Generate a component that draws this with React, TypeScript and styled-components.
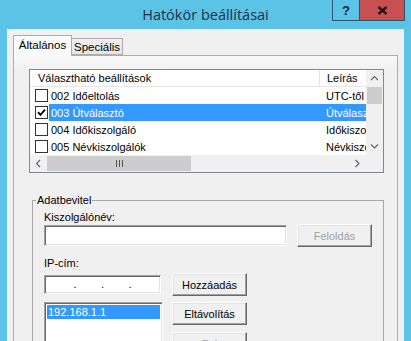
import styled, { createGlobalStyle } from 'styled-components';

const GlobalStyle = createGlobalStyle`
  html, body {
    margin: 0;
    padding: 0;
    background: #5bc3e6;
  }
  * {
    box-sizing: border-box;
  }
`;

const OPTIONS = [
  { id: '002', name: '002 Időeltolás', desc: 'UTC-től', checked: false, selected: false },
  { id: '003', name: '003 Útválasztó', desc: 'Útválasztó', checked: true, selected: true },
  { id: '004', name: '004 Időkiszolgáló', desc: 'Időkiszolgáló', checked: false, selected: false },
  { id: '005', name: '005 Névkiszolgálók', desc: 'Névkiszolgálók', checked: false, selected: false },
];

const Chevron = ({ dir }: { dir: 'up' | 'down' | 'left' | 'right' }) => {
  const pts = {
    up: '1,5 4.5,1.5 8,5',
    down: '1,1.5 4.5,5 8,1.5',
    left: '5,1 1.5,4.5 5,8',
    right: '1.5,1 5,4.5 1.5,8',
  }[dir];
  const w = dir === 'up' || dir === 'down' ? 9 : 7;
  const h = dir === 'up' || dir === 'down' ? 7 : 9;
  return (
    <svg width={w} height={h} viewBox={`0 0 ${w} ${h}`}>
      <polyline points={pts} fill="none" stroke="#606060" strokeWidth="1.1" />
    </svg>
  );
};

const App = () => {
  return (
    <>
      <GlobalStyle />
      <Window>
        <TitleBar>
          <span />
          <Title>Hatókör beállításai</Title>
          <CaptionGroup>
            <HelpButton>?</HelpButton>
            <CloseButton>
              <svg width="11" height="9" viewBox="0 0 11 9">
                <path d="M1.5 1 L9.5 8 M9.5 1 L1.5 8" stroke="#1b1b1b" strokeWidth="2.4" />
              </svg>
            </CloseButton>
          </CaptionGroup>
        </TitleBar>

        <Client>
          <TabStrip>
            <Tab $active $width={59}>Általános</Tab>
            <Tab $width={51}>Speciális</Tab>
          </TabStrip>
          <TabPanel>
            <ListView>
              <ListMain>
                <Columns>
                  <HeaderRow>
                    <NameHeader>Választható beállítások</NameHeader>
                    <DescHeader>Leírás</DescHeader>
                  </HeaderRow>
                  {OPTIONS.map((o) => (
                    <Row key={o.id}>
                      <CheckCell>
                        <CheckBox>
                          {o.checked && (
                            <svg width="9" height="9" viewBox="0 0 9 9">
                              <path d="M1 4.2 L3.4 6.8 L8 1.6" fill="none" stroke="#000" strokeWidth="1.8" />
                            </svg>
                          )}
                        </CheckBox>
                      </CheckCell>
                      <NameCell $selected={o.selected}>{o.name}</NameCell>
                      <DescCell $selected={o.selected}>{o.desc}</DescCell>
                    </Row>
                  ))}
                </Columns>
                <VScroll>
                  <ScrollArrow><Chevron dir="up" /></ScrollArrow>
                  <VThumb />
                  <VTrack />
                  <ScrollArrow><Chevron dir="down" /></ScrollArrow>
                </VScroll>
              </ListMain>
              <HScrollRow>
                <HScroll>
                  <ScrollArrow><Chevron dir="left" /></ScrollArrow>
                  <HThumb>
                    <Grip />
                    <Grip />
                    <Grip />
                  </HThumb>
                  <HTrack />
                  <ScrollArrow><Chevron dir="right" /></ScrollArrow>
                </HScroll>
                <Corner />
              </HScrollRow>
            </ListView>

            <Group>
              <Legend>Adatbevitel</Legend>
              <FieldLabel>Kiszolgálónév:</FieldLabel>
              <InputRow>
                <SunkenInput $width={243} $height={21} />
                <PushButton $disabled $width={75} $gap={10}>Feloldás</PushButton>
              </InputRow>

              <FieldLabel $top={10}>IP-cím:</FieldLabel>
              <IpArea>
                <IpColumn>
                  <IpInput>
                    <IpSeg />
                    <IpDot>.</IpDot>
                    <IpSeg />
                    <IpDot>.</IpDot>
                    <IpSeg />
                    <IpDot>.</IpDot>
                    <IpSeg />
                  </IpInput>
                  <AddressList>
                    <AddressItem $selected>192.168.1.1</AddressItem>
                  </AddressList>
                </IpColumn>
                <ButtonColumn>
                  <PushButton $width={75}>Hozzáadás</PushButton>
                  <PushButton $width={75}>Eltávolítás</PushButton>
                  <PushButton $disabled $width={75} $top={1}>Fel</PushButton>
                </ButtonColumn>
              </IpArea>
            </Group>
          </TabPanel>
        </Client>
      </Window>
    </>
  );
};

export default App;

const Window = styled.div`
  width: 411px;
  height: 341px;
  overflow: hidden;
  background: #5bc3e6;
  font-family: 'Liberation Sans', Arial, sans-serif;
  font-size: 11px;
  color: #000;
`;

const TitleBar = styled.div`
  height: 29px;
  display: grid;
  grid-template-columns: 1fr auto 1fr;
  align-items: start;
`;

const Title = styled.div`
  font-family: 'Open Sans', 'Noto Sans', sans-serif;
  font-size: 14.5px;
  line-height: 29px;
  color: #1e3148;
  white-space: nowrap;
`;

const CaptionGroup = styled.div`
  justify-self: end;
  margin-right: 6px;
  display: flex;
  height: 21px;
  border: 1px solid #2c526e;
  border-top: none;
`;

const HelpButton = styled.div`
  width: 27px;
  display: flex;
  align-items: center;
  justify-content: center;
  font-family: 'Liberation Sans', Arial, sans-serif;
  font-weight: 700;
  font-size: 13px;
  color: #14273a;
  border-right: 1px solid #2c526e;
`;

const CloseButton = styled.div`
  width: 44px;
  background: #c75050;
  display: flex;
  align-items: center;
  justify-content: center;
`;

const Client = styled.div`
  margin: 0 7px;
  height: 312px;
  background: #f0f0f0;
  padding: 7px 6px 0 6px;
`;

const TabStrip = styled.div`
  display: flex;
  align-items: flex-end;
  height: 20px;
  position: relative;
  z-index: 1;
  margin-bottom: -1px;
`;

const Tab = styled.div<{ $active?: boolean; $width: number }>`
  width: ${(p) => p.$width}px;
  flex: none;
  height: ${(p) => (p.$active ? '21px' : '17px')};
  margin-bottom: ${(p) => (p.$active ? '0' : '1px')};
  padding-top: ${(p) => (p.$active ? '2px' : '1px')};
  text-align: center;
  border: 1px solid #acacac;
  border-bottom: ${(p) => (p.$active ? 'none' : '1px solid #acacac')};
  border-left: ${(p) => (p.$active ? '1px solid #acacac' : 'none')};
  background: ${(p) => (p.$active ? '#fafafa' : 'linear-gradient(#f0f0f0, #e5e5e5)')};
  font-size: 11.5px;
  line-height: 14px;
  white-space: nowrap;
  overflow: hidden;
`;

const TabPanel = styled.div`
  height: 400px;
  border: 1px solid #acacac;
  background: linear-gradient(#fafafa, #f0f0f0 14px);
  padding: 13px 0 0 15px;
`;

const ListView = styled.div`
  width: 355px;
  border: 1px solid #828790;
  background: #fff;
`;

const ListMain = styled.div`
  display: flex;
`;

const Columns = styled.div`
  flex: 1;
  min-width: 0;
`;

const HeaderRow = styled.div`
  display: flex;
  height: 17px;
  border-bottom: 1px solid #e5e5e5;
  line-height: 16px;
`;

const NameHeader = styled.div`
  width: 290px;
  padding-left: 8px;
  border-right: 1px solid #e5e5e5;
`;

const DescHeader = styled.div`
  flex: 1;
  padding-left: 7px;
  white-space: nowrap;
  overflow: hidden;
`;

const Row = styled.div`
  display: flex;
  height: 17px;
  line-height: 18px;
`;

const CheckCell = styled.div`
  width: 19px;
  padding-left: 5px;
  display: flex;
  align-items: center;
`;

const CheckBox = styled.div`
  width: 13px;
  height: 13px;
  border: 1px solid #333;
  background: #fff;
  display: flex;
  align-items: center;
  justify-content: center;
`;

const NameCell = styled.div<{ $selected?: boolean }>`
  width: 271px;
  padding-left: 2px;
  white-space: nowrap;
  background: ${(p) => (p.$selected ? '#3399ff' : 'transparent')};
  color: ${(p) => (p.$selected ? '#fff' : '#000')};
`;

const DescCell = styled.div<{ $selected?: boolean }>`
  flex: 1;
  padding-left: 6px;
  white-space: nowrap;
  overflow: hidden;
  text-overflow: clip;
  background: ${(p) => (p.$selected ? '#3399ff' : 'transparent')};
  color: ${(p) => (p.$selected ? '#fff' : '#000')};
`;

const VScroll = styled.div`
  width: 17px;
  display: flex;
  flex-direction: column;
  background: #f0f0f0;
`;

const ScrollArrow = styled.div`
  width: 17px;
  height: 17px;
  flex: none;
  display: flex;
  align-items: center;
  justify-content: center;
  background: #f0f0f0;
`;

const VThumb = styled.div`
  height: 17px;
  margin: 0 1px;
  background: #cdcdcd;
`;

const VTrack = styled.div`
  flex: 1;
`;

const HScrollRow = styled.div`
  display: flex;
  height: 17px;
`;

const HScroll = styled.div`
  flex: 1;
  display: flex;
  background: #f0f0f0;
`;

const HThumb = styled.div`
  width: 144px;
  margin: 1px 0;
  background: #cdcdcd;
  display: flex;
  align-items: center;
  justify-content: center;
  gap: 2px;
`;

const Grip = styled.div`
  width: 1px;
  height: 7px;
  background: #555;
`;

const HTrack = styled.div`
  flex: 1;
`;

const Corner = styled.div`
  width: 17px;
  background: #f0f0f0;
`;

const Group = styled.fieldset`
  width: 352px;
  margin: 21px 0 0 3px;
  padding: 4px 11px 0 11px;
  border: 1px solid #a8a8a8;
  min-width: 0;
`;

const Legend = styled.legend`
  padding: 0 1px;
  margin-left: -8px;
  line-height: 13px;
`;

const FieldLabel = styled.div<{ $top?: number }>`
  margin-top: ${(p) => p.$top ?? 0}px;
  line-height: 13px;
`;

const InputRow = styled.div`
  display: flex;
  align-items: center;
`;

const SunkenInput = styled.div<{ $width: number; $height: number }>`
  width: ${(p) => p.$width}px;
  height: ${(p) => p.$height}px;
  background: #fff;
  border: 1px solid;
  border-color: #a0a0a0 #fff #fff #a0a0a0;
  box-shadow: inset 1px 1px 0 #696969, inset -1px -1px 0 #e3e3e3;
`;

const PushButton = styled.div<{ $width: number; $disabled?: boolean; $gap?: number; $top?: number }>`
  width: ${(p) => p.$width}px;
  height: 23px;
  flex: none;
  margin-left: ${(p) => p.$gap ?? 0}px;
  margin-top: ${(p) => p.$top ?? 0}px;
  display: flex;
  align-items: center;
  justify-content: center;
  background: #f0f0f0;
  border: 1px solid;
  border-color: #fff #696969 #696969 #fff;
  box-shadow: inset -1px -1px 0 #a0a0a0, inset 1px 1px 0 #e3e3e3;
  color: ${(p) => (p.$disabled ? '#a0a0a0' : '#000')};
  white-space: nowrap;
`;

const IpArea = styled.div`
  display: flex;
  gap: 9px;
  margin-top: 3px;
`;

const IpColumn = styled.div`
  width: 119px;
  display: flex;
  flex-direction: column;
  gap: 8px;
  padding-top: 2px;
`;

const IpInput = styled.div`
  width: 117px;
  height: 19px;
  display: flex;
  align-items: center;
  padding: 0 4px;
  background: #fff;
  border: 1px solid;
  border-color: #a0a0a0 #fff #fff #a0a0a0;
  box-shadow: inset 1px 1px 0 #696969, inset -1px -1px 0 #e3e3e3;
`;

const IpSeg = styled.div`
  flex: 1;
`;

const IpDot = styled.div`
  width: 3px;
  text-align: center;
  line-height: 13px;
`;

const AddressList = styled.div`
  height: 60px;
  padding: 2px;
  background: #fff;
  border: 1px solid;
  border-color: #a0a0a0 #fff #fff #a0a0a0;
  box-shadow: inset 1px 1px 0 #696969, inset -1px -1px 0 #e3e3e3;
`;

const AddressItem = styled.div<{ $selected?: boolean }>`
  height: 14px;
  line-height: 14px;
  padding-left: 1px;
  background: ${(p) => (p.$selected ? '#3399ff' : 'transparent')};
  color: ${(p) => (p.$selected ? '#fff' : '#000')};
`;

const ButtonColumn = styled.div`
  display: flex;
  flex-direction: column;
  gap: 6px;
`;
